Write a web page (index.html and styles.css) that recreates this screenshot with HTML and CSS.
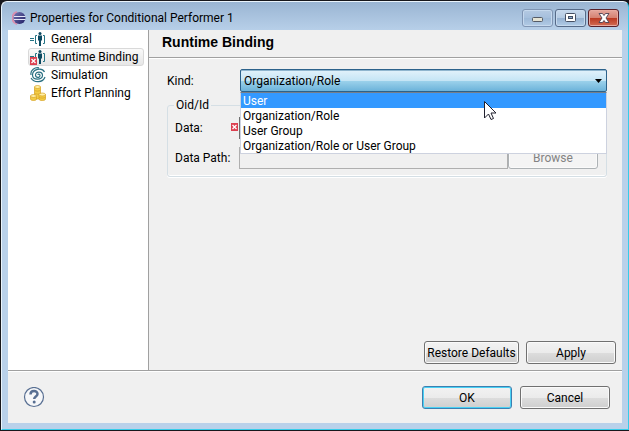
FILE: index.html
```html
<!DOCTYPE html>
<html lang="en">
<head>
<meta charset="utf-8">
<title>Properties for Conditional Performer 1</title>
<link rel="stylesheet" href="styles.css">
</head>
<body>
<div class="window">
  <header class="titlebar">
    <svg class="logo" width="14" height="14" viewBox="0 0 14 14" aria-hidden="true">
      <defs><linearGradient id="orb" x1="0" y1="0" x2="1" y2="1"><stop offset="0" stop-color="#7878b4"/><stop offset="1" stop-color="#1d1b62"/></linearGradient></defs>
      <path d="M5 1C-1 3-1 11 5 13" fill="none" stroke="#d98fae" stroke-width="2"/>
      <circle cx="7.5" cy="7" r="6" fill="url(#orb)"/>
      <path d="M2 5.500h11.500M2 8.500h11.500" stroke="#e6e6f7" stroke-width="1"/>
    </svg>
    <h1 class="title">Properties for Conditional Performer 1</h1>
    <div class="captions">
      <button class="caption" type="button" aria-label="Minimize"><svg width="12" height="12" viewBox="0 0 12 12"><rect x=".5" y="5.500" width="10" height="4" rx="1" fill="#e4e3d4" stroke="#555b66"/></svg></button>
      <button class="caption maximize" type="button" aria-label="Maximize"><svg width="12" height="12" viewBox="0 0 12 12"><rect x=".5" y="1.500" width="10" height="8" rx="1" fill="#fff" stroke="#454f63"/><rect x="3.500" y="4.500" width="4" height="2" fill="#8eadd0" stroke="#454f63"/></svg></button>
      <button class="caption close" type="button" aria-label="Close"><svg width="12" height="12" viewBox="0 0 12 12"><path d="M1 1.500h3.500L6 3.500l1.500-2H11L8 6l3 4.500H7.500L6 8.500l-1.500 2H1L4 6z" fill="#fff" stroke="#4c4051" stroke-width=".9"/></svg></button>
    </div>
  </header>
  <div class="client">
    <div class="main">
      <nav class="tree">
        <a class="node" href="#general"><svg width="16" height="16" viewBox="0 0 16 16" aria-hidden="true"><path d="M0 7.500h4M0 9.500h4M7 4.500H5.500v8H7M13 4.500h1.500v8H13" fill="none" stroke="#247485"/><circle cx="10" cy="2.500" r="1.500" fill="#0c4961"/><path d="M8 4.500h4v5h-1V15H9V9.500H8z" fill="#0c4961"/></svg>General</a>
        <a class="node selected" href="#binding" aria-current="page"><svg width="16" height="16" viewBox="0 0 16 16" aria-hidden="true"><path d="M0 7.500h4M7 4.500H5.500v8H7M13 4.500h1.500v8H13" fill="none" stroke="#247485"/><circle cx="10" cy="2.500" r="1.500" fill="#0c4961"/><path d="M8 4.500h4v5h-1V15H9V9.500H8z" fill="#0c4961"/><path d="M0 8h7v8H0z" fill="#dc4050"/><path d="M1.500 10l4 4m0-4l-4 4" stroke="#fff" stroke-width="1.300"/></svg>Runtime Binding</a>
        <a class="node" href="#simulation"><svg width="16" height="16" viewBox="0 0 16 16" aria-hidden="true"><path d="M8 8c0-1.500 2-1 2 .5 0 2.500-4.500 2.500-4.500-.5 0-4 7-4 7 .5 0 5-10 5-10-.5C2.500 2 12 0 14.500 5M1 11c3 5 12 5 14-1M1 8C0 3 5 0 9 .8" fill="none" stroke="#2c7183" stroke-width="1.200"/></svg>Simulation</a>
        <a class="node" href="#effort"><svg width="16" height="16" viewBox="0 0 16 16" aria-hidden="true"><g fill="#f3cc45" stroke="#d5a021" stroke-width=".7"><path d="M4.500 2v12h6V2z"/><ellipse cx="7.500" cy="2" rx="3" ry="1.500" fill="#fff0a6"/><path d="M4.500 5c1 1.500 5 1.500 6 0M4.500 8c1 1.500 5 1.500 6 0" fill="none"/><path d="M.5 11v3c0 2 6 2 6 0v-3z"/><ellipse cx="3.500" cy="11" rx="3" ry="1.500" fill="#ffeda0"/><path d="M9 9.500v4.500c0 2 6.500 2 6.500 0V9.500z"/><ellipse cx="12.200" cy="9.500" rx="3.200" ry="1.500" fill="#fff0a6"/><path d="M9 12c1 1.500 5.500 1.500 6.500 0" fill="none"/></g></svg>Effort Planning</a>
      </nav>
      <section class="page">
        <h2 class="heading">Runtime Binding</h2>
        <form class="form">
          <div class="kind-row">
            <label for="kind">Kind:</label>
            <div class="combo">
              <select id="kind"><option>Organization/Role</option><option>User</option><option>User Group</option><option>Organization/Role or User Group</option></select>
              <svg class="arrow" width="7" height="4" viewBox="0 0 7 4" aria-hidden="true"><path d="M0 0h7L3.500 4z"/></svg>
              <ul class="menu" role="listbox" aria-label="Kind">
                <li class="active" role="option" aria-selected="true">User</li>
                <li role="option">Organization/Role</li>
                <li role="option">User Group</li>
                <li role="option">Organization/Role or User Group</li>
              </ul>
              <svg class="pointer" width="13" height="20" viewBox="0 0 13 20" aria-hidden="true"><path d="M.5.5v16.500l4-4 2.500 5.500 2.500-1-2.500-5.500h5z" fill="#fff" stroke="#20202e"/></svg>
            </div>
          </div>
          <fieldset class="group">
            <legend>Oid/Id</legend>
            <div class="field">
              <label for="data">Data:</label>
              <svg class="error" width="7" height="8" viewBox="0 0 7 8" aria-hidden="true"><path d="M0 0h7v8H0z" fill="#dc4050"/><path d="M1.500 2l4 4m0-4l-4 4" stroke="#fff" stroke-width="1.300"/></svg>
              <input id="data" class="data" type="text">
            </div>
            <div class="field">
              <label for="path">Data Path:</label>
              <input id="path" type="text" disabled>
              <button class="button browse" type="button" disabled>Browse</button>
            </div>
          </fieldset>
          <div class="page-actions">
            <button class="button restore" type="button">Restore Defaults</button>
            <button class="button" type="button">Apply</button>
          </div>
        </form>
      </section>
    </div>
    <footer class="footer">
      <button class="help" type="button" aria-label="Help"><svg width="22" height="22" viewBox="0 0 22 22"><circle cx="11" cy="10" r="9.500" fill="#f6f7f9" stroke="#586f92" stroke-width="1.200"/><path d="M7.500 7.500C7.500 3 14.500 3 14.500 7c0 2.500-3.300 2.500-3.300 5" fill="none" stroke="#586f92" stroke-width="2.500"/><circle cx="11.200" cy="15" r="1.500" fill="#586f92"/></svg></button>
      <button class="button ok" type="button">OK</button>
      <button class="button" type="button">Cancel</button>
    </footer>
  </div>
</div>
</body>
</html>
```
FILE: styles.css
```css
* { box-sizing: border-box; }

body {
  margin: 0;
  background: #17171c;
  color: #000;
  font: 12px/18px Roboto, "Noto Sans", sans-serif;
}

button, select, input { font: inherit; color: inherit; }

.window {
  display: flex;
  flex-direction: column;
  min-height: calc(100vh - 2px);
  margin: 1px 0 1px 1px;
  padding: 0 6px 6px;
  border: 1px solid #eaf4fc;
  border-right-color: #35cce9;
  border-bottom-color: #35cce9;
  border-radius: 6px 6px 0 0;
  background: linear-gradient(#9ab5d3, #b9d1ea 30px);
}

.titlebar {
  display: flex;
  align-items: center;
  height: 28px;
  padding: 4px 3px 0 4px;
}

.logo { flex: none; }

.title {
  flex: 1;
  margin: 0 0 0 4px;
  font-size: 12px;
  font-weight: 400;
  white-space: nowrap;
}

.captions { display: flex; gap: 2px; }

.caption {
  display: grid;
  place-items: center;
  width: 31px;
  height: 18px;
  padding: 0;
  border: 1px solid #8095b3;
  border-radius: 3px;
  background: linear-gradient(#b5cae2, #a5bfdd 50%, #9cb8d7 50%, #b2cbe5);
  box-shadow: inset 0 0 0 1px #c6d9ee;
}

.maximize {
  border-color: #566a88;
  background: linear-gradient(#c8d9ed, #b4cae3 50%, #94b0d0 50%, #b1cce7);
}

.close {
  border-color: #58202a;
  background: linear-gradient(#e5a79e, #d58070 50%, #ba3720 50%, #d26d55);
  box-shadow: inset 0 0 0 1px #e8aaa0;
}

.client {
  flex: 1;
  display: flex;
  flex-direction: column;
  background: #f0f0f0;
}

.main {
  flex: 1;
  display: flex;
  border-bottom: 1px solid #a0a0a0;
}

.tree {
  flex: none;
  width: 141px;
  padding: 0 4px 0 20px;
  border-right: 1px solid #a0a0a0;
  background: #fff;
}

.node {
  display: flex;
  align-items: center;
  gap: 5px;
  height: 18px;
  padding: 0 1px;
  border: 1px solid transparent;
  border-radius: 3px;
  color: #000;
  text-decoration: none;
  white-space: nowrap;
}

.node svg { flex: none; }

.selected {
  border-color: #d9d9d9;
  background: linear-gradient(#fafafa, #e6e6e6);
}

.page {
  flex: 1;
  display: flex;
  flex-direction: column;
  min-width: 0;
}

.heading {
  margin: 0;
  height: 28px;
  padding: 0 13px;
  border-bottom: 1px solid #a0a0a0;
  box-shadow: 0 1px #fff;
  font: bold 14px/24px "Liberation Sans", sans-serif;
}

.form {
  flex: 1;
  display: flex;
  flex-direction: column;
  padding: 11px 6px 6px 18px;
}

.kind-row {
  display: flex;
  align-items: center;
  margin-right: 9px;
}

.kind-row label { width: 73px; }

.combo { position: relative; flex: 1; }

select {
  display: block;
  width: 100%;
  height: 23px;
  padding: 0 3px;
  border: 1px solid #2c628b;
  border-radius: 2px;
  appearance: none;
  background: linear-gradient(#e2f2fb, #c5e5f5 50%, #9ed3ec 50%, #6cb3da);
  box-shadow: inset 0 1px #8fb5ce;
}

.arrow { position: absolute; top: 10px; right: 5px; }

.menu {
  position: absolute;
  z-index: 1;
  top: 23px;
  right: 0;
  left: 0;
  margin: 0;
  padding: 0;
  border: 1px solid #cdd2df;
  border-top-color: #777f88;
  background: #fff;
  line-height: 13px;
  list-style: none;
}

.menu li { padding: 2px 2px 0; }

.menu .active { background: #3399ff; color: #fff; }

.pointer { position: absolute; z-index: 2; top: 32px; right: 110px; }

.group {
  display: flex;
  flex-direction: column;
  gap: 7px;
  min-width: 0;
  margin: 4px 9px 0 0;
  padding: 3px 8px 7px 7px;
  border: 1px solid #d5dfe5;
  border-radius: 3px;
  box-shadow: inset 0 -1px #fff, 0 1px #fff;
}

legend { padding: 0 2px; margin-left: -1px; }

.field {
  position: relative;
  display: flex;
  align-items: center;
}

.field label { width: 64px; white-space: nowrap; }

.field input {
  flex: 1;
  min-width: 0;
  height: 22px;
  border: 1px solid #afafaf;
  background: #f0f0f0;
}

.field .data { border-color: #707070; background: #fff; }

.error { position: absolute; top: 6px; left: 56px; }

.page-actions {
  display: flex;
  justify-content: flex-end;
  gap: 7px;
  margin-top: auto;
}

.button {
  width: 90px;
  height: 23px;
  padding: 0;
  border: 1px solid #707070;
  border-radius: 3px;
  background: linear-gradient(#f2f2f2, #ebebeb 50%, #dddddd 50%, #cfcfcf);
  box-shadow: inset 0 0 0 1px #fafafa;
  line-height: 18px;
  white-space: nowrap;
}

.restore { width: 95px; }

.browse {
  border-color: #adb2b5;
  background: #f4f4f4;
  color: #838383;
}

.ok {
  border-color: #3c7fb1;
  box-shadow: inset 0 0 0 1px #48d1f4;
}

.footer {
  display: flex;
  align-items: center;
  gap: 8px;
  height: 52px;
  padding: 0 12px 0 15px;
  border-top: 1px solid #fff;
}

.help {
  display: flex;
  margin-right: auto;
  padding: 0;
  border: 0;
  background: none;
}
```
